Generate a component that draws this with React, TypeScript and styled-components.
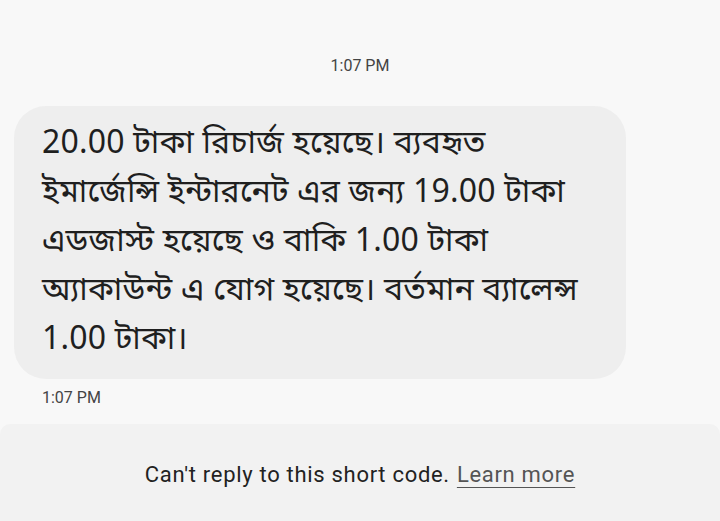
import React from "react";
import styled, { createGlobalStyle } from "styled-components";

const Global = createGlobalStyle`
  html, body { margin: 0; padding: 0; background: #f8f8f8; }
  body { font-family: Roboto, "Noto Sans", sans-serif; }
`;

const Screen = styled.div`
  width: 720px;
  height: 521px;
  display: flex;
  flex-direction: column;
  background: #f8f8f8;
  overflow: hidden;
`;

const Thread = styled.div`
  flex: 1;
  display: flex;
  flex-direction: column;
  padding: 56px 0 0 14px;
`;

const DayStamp = styled.div`
  align-self: center;
  margin-left: -14px;
  font-size: 16px;
  color: #444;
  line-height: 20px;
`;

const Bubble = styled.div`
  margin-top: 30px;
  width: 612px;
  box-sizing: border-box;
  background: #eeeeee;
  border-radius: 32px;
  padding: 10px 28px 18px 28px;
  font-family: "Noto Sans", "Noto Sans Bengali", "Lohit Bengali", sans-serif;
  font-size: 32px;
  line-height: 49px;
  letter-spacing: 0.2px;
  color: #1f1f1f;
`;

const Line = styled.div`
  white-space: nowrap;
`;

const Time = styled.div`
  margin: 9px 0 0 28px;
  font-size: 16px;
  line-height: 20px;
  color: #444;
`;

const Footer = styled.div`
  height: 97px;
  background: #f2f2f2;
  border-radius: 10px 10px 0 0;
  display: flex;
  align-items: center;
  justify-content: center;
  font-size: 22px;
  letter-spacing: 0.7px;
  color: #222;
  padding-top: 4px;
  box-sizing: border-box;
`;

const Link = styled.span`
  color: #555;
  text-decoration: underline;
  text-underline-offset: 5px;
  text-decoration-thickness: 1px;
  margin-left: 7px;
`;

const lines = [
  "20.00 টাকা রিচার্জ হয়েছে। ব্যবহৃত",
  "ইমার্জেন্সি ইন্টারনেট এর জন্য 19.00 টাকা",
  "এডজাস্ট হয়েছে ও বাকি 1.00 টাকা",
  "অ্যাকাউন্ট এ যোগ হয়েছে। বর্তমান ব্যালেন্স",
  "1.00 টাকা।",
];

export default function App() {
  return (
    <Screen>
      <Global />
      <Thread>
        <DayStamp>1:07 PM</DayStamp>
        <Bubble>
          {lines.map((l) => (
            <Line key={l}>{l}</Line>
          ))}
        </Bubble>
        <Time>1:07 PM</Time>
      </Thread>
      <Footer>
        Can't reply to this short code.<Link>Learn more</Link>
      </Footer>
    </Screen>
  );
}
